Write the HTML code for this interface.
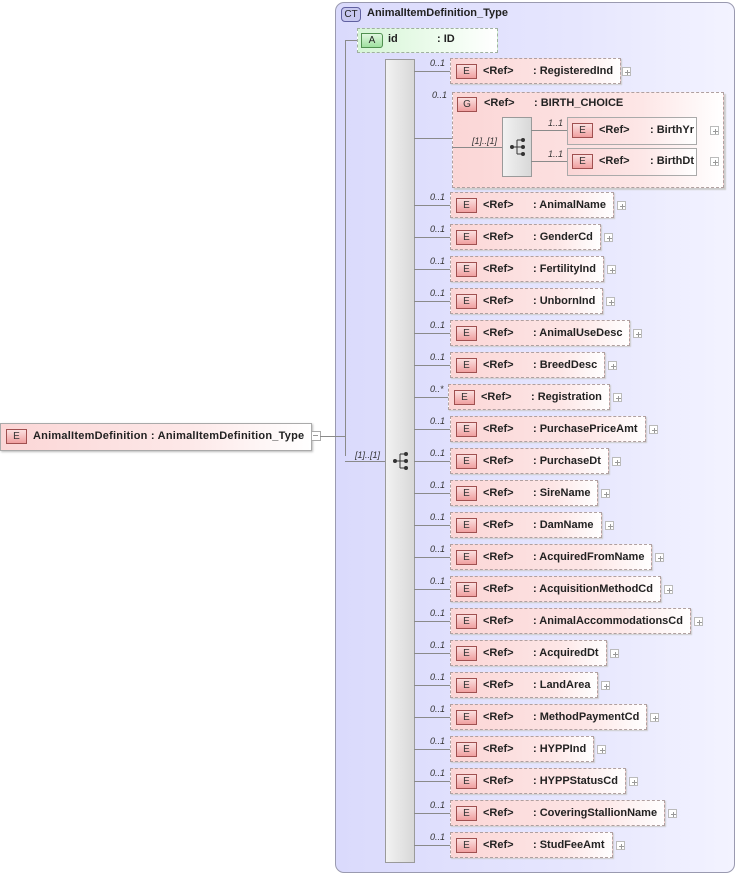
<!DOCTYPE html>
<html><head><meta charset="utf-8"><style>
body{margin:0;width:737px;height:875px;background:#fff;position:relative;font-family:"Liberation Sans",sans-serif;font-size:11px;font-weight:bold;color:#222;overflow:hidden}
.abs{position:absolute}
.ct{left:335px;top:2px;width:398px;height:869px;border:1px solid #9a9ab0;border-radius:9px;background:linear-gradient(90deg,#dadafc 0%,#e6e6fe 60%,#f3f3ff 100%)}
.hl{position:absolute;height:1px;background:#8a8a8a}
.vl{position:absolute;width:1px;background:#8a8a8a}
.bar{position:absolute;background:linear-gradient(90deg,#f2f2f2,#d8d8d8);border:1px solid #9a9a9a}
.r{position:absolute;left:414px;height:26px;width:320px}
.r .ln{position:absolute;left:0;top:13px;width:36px;height:1px;background:#8a8a8a}
.r i{position:absolute;left:16px;top:0;font-size:9px;font-weight:normal;color:#333}
.e{position:absolute;left:36px;top:0;height:24px;border:1px dashed #b0a0a0;background:linear-gradient(90deg,#fbd6d6,#fde6e6 70%,#fff);box-shadow:1px 1px 1px #ccc;white-space:nowrap;padding-right:7px}
.e b,.b{position:absolute;width:19px;height:13px;top:5px;left:5px;border:1px solid #a05050;background:linear-gradient(#fbe0e0,#f0a0a0);font-size:10px;font-weight:normal;text-align:center;line-height:13px;color:#333}
.e .ref{position:absolute;left:32px;top:6px}
.e .n{display:inline-block;padding-left:82px;line-height:13px;padding-top:6px}
.pw{position:absolute;top:9px;width:9px;height:9px}
.pw:before{content:"";position:absolute;left:2px;top:4px;width:5px;height:1px;background:#999}
.pw:after{content:"";position:absolute;left:4px;top:2px;width:1px;height:5px;background:#999}
.pw{border:1px solid #bbb;box-sizing:border-box;background:#fff}
.mult{position:absolute;font-size:9px;font-style:italic;font-weight:normal;color:#333}
</style></head><body>
<div class="abs ct"></div>
<div class="abs" style="left:341px;top:7px;width:18px;height:13px;border:1px solid #6060a0;border-radius:4px;background:#c8c8f0;font-size:10px;font-weight:normal;text-align:center;line-height:13px">CT</div>
<div class="abs" style="left:367px;top:7px">AnimalItemDefinition_Type</div>

<div class="abs" style="left:0;top:423px;width:310px;height:26px;border:1px solid #aaa;background:linear-gradient(90deg,#fbd6d6,#fde8e8 60%,#fff);box-shadow:1px 1px 2px #bbb"></div>
<div class="b" style="left:6px;top:429px">E</div>
<div class="abs" style="left:33px;top:430px;letter-spacing:0.23px">AnimalItemDefinition : AnimalItemDefinition_Type</div>
<div class="abs" style="left:311px;top:431px;width:8px;height:8px;border:1px solid #aaa;background:#fff"></div>
<div class="hl" style="left:313px;top:435px;width:5px;background:#999"></div>
<div class="hl" style="left:320px;top:436px;width:25px"></div>
<div class="vl" style="left:345px;top:40px;height:416px"></div>
<div class="hl" style="left:345px;top:40px;width:15px"></div>
<div class="hl" style="left:345px;top:461px;width:40px"></div>
<div class="mult" style="left:355px;top:450px">[1]..[1]</div>

<div class="abs" style="left:357px;top:28px;width:139px;height:23px;border:1px dashed #a0b0a0;background:linear-gradient(90deg,#d6f5d6,#eefcee 60%,#fff)"></div>
<div class="abs" style="left:361px;top:33px;width:20px;height:13px;border:1px solid #509050;border-radius:0 3px 3px 0;background:linear-gradient(#e0f8e0,#a0e0a0);font-size:10px;font-weight:normal;text-align:center;line-height:13px">A</div>
<div class="abs" style="left:388px;top:33px">id</div>
<div class="abs" style="left:437px;top:33px">: ID</div>

<div class="bar" style="left:385px;top:59px;width:28px;height:802px"></div>
<svg class="abs" style="left:392px;top:451px" width="18" height="20"><circle cx="3" cy="10" r="2" fill="#333"/><path d="M3 10H8M8 3V17M8 3H13M8 10H13M8 17H13" stroke="#333" fill="none"/><circle cx="14" cy="3" r="2" fill="#333"/><circle cx="14" cy="10" r="2" fill="#333"/><circle cx="14" cy="17" r="2" fill="#333"/></svg>

<div class="r" style="top:58px"><div class="ln"></div><i>0..1</i><div class="e"><b>E</b><span class="ref">&lt;Ref&gt;</span><span class="n">: RegisteredInd</span></div></div>
<div class="pw" style="left:622px;top:67px"></div>

<div class="hl" style="left:414px;top:138px;width:38px"></div>
<div class="mult" style="left:432px;top:90px">0..1</div>
<div class="abs" style="left:452px;top:92px;width:270px;height:94px;border:1px dashed #b0a0a0;background:linear-gradient(90deg,#fbd6d6,#fde6e6 70%,#fff);box-shadow:2px 2px 1px #ccc"></div>
<div class="b" style="left:457px;top:97px;width:18px">G</div>
<div class="abs" style="left:484px;top:97px">&lt;Ref&gt;</div>
<div class="abs" style="left:534px;top:97px">: BIRTH_CHOICE</div>
<div class="hl" style="left:452px;top:147px;width:50px"></div>
<div class="mult" style="left:472px;top:136px">[1]..[1]</div>
<div class="bar" style="left:502px;top:117px;width:28px;height:58px"></div>
<svg class="abs" style="left:509px;top:137px" width="18" height="20"><circle cx="3" cy="10" r="2" fill="#333"/><path d="M3 10H8M8 3V17M8 3H13M8 10H13M8 17H13" stroke="#333" fill="none"/><circle cx="14" cy="3" r="2" fill="#333"/><circle cx="14" cy="10" r="2" fill="#333"/><circle cx="14" cy="17" r="2" fill="#333"/></svg>
<div class="hl" style="left:531px;top:130px;width:36px"></div>
<div class="hl" style="left:531px;top:161px;width:36px"></div>
<div class="mult" style="left:548px;top:118px">1..1</div>
<div class="mult" style="left:548px;top:149px">1..1</div>
<div class="abs" style="left:567px;top:117px;width:128px;height:26px;border:1px solid #aaa;background:linear-gradient(90deg,#fbd6d6,#fde8e8 60%,#fff)"></div>
<div class="b" style="left:572px;top:123px">E</div>
<div class="abs" style="left:599px;top:124px">&lt;Ref&gt;</div>
<div class="abs" style="left:650px;top:124px">: BirthYr</div>
<div class="pw" style="left:710px;top:126px"></div>
<div class="abs" style="left:567px;top:148px;width:128px;height:26px;border:1px solid #aaa;background:linear-gradient(90deg,#fbd6d6,#fde8e8 60%,#fff)"></div>
<div class="b" style="left:572px;top:154px">E</div>
<div class="abs" style="left:599px;top:155px">&lt;Ref&gt;</div>
<div class="abs" style="left:650px;top:155px">: BirthDt</div>
<div class="pw" style="left:710px;top:157px"></div>

<div class="r" style="top:192px"><div class="ln"></div><i>0..1</i><div class="e"><b>E</b><span class="ref">&lt;Ref&gt;</span><span class="n">: AnimalName</span><span class="pw" style="position:absolute;right:-13px;top:8px"></span></div></div>
<div class="r" style="top:224px"><div class="ln"></div><i>0..1</i><div class="e"><b>E</b><span class="ref">&lt;Ref&gt;</span><span class="n">: GenderCd</span><span class="pw" style="position:absolute;right:-13px;top:8px"></span></div></div>
<div class="r" style="top:256px"><div class="ln"></div><i>0..1</i><div class="e"><b>E</b><span class="ref">&lt;Ref&gt;</span><span class="n">: FertilityInd</span><span class="pw" style="position:absolute;right:-13px;top:8px"></span></div></div>
<div class="r" style="top:288px"><div class="ln"></div><i>0..1</i><div class="e"><b>E</b><span class="ref">&lt;Ref&gt;</span><span class="n">: UnbornInd</span><span class="pw" style="position:absolute;right:-13px;top:8px"></span></div></div>
<div class="r" style="top:320px"><div class="ln"></div><i>0..1</i><div class="e"><b>E</b><span class="ref">&lt;Ref&gt;</span><span class="n">: AnimalUseDesc</span><span class="pw" style="position:absolute;right:-13px;top:8px"></span></div></div>
<div class="r" style="top:352px"><div class="ln"></div><i>0..1</i><div class="e"><b>E</b><span class="ref">&lt;Ref&gt;</span><span class="n">: BreedDesc</span><span class="pw" style="position:absolute;right:-13px;top:8px"></span></div></div>
<div class="r" style="top:384px"><div class="ln" style="width:34px"></div><i>0..*</i><div class="e" style="left:34px"><b>E</b><span class="ref">&lt;Ref&gt;</span><span class="n">: Registration</span><span class="pw" style="position:absolute;right:-13px;top:8px"></span></div></div>
<div class="r" style="top:416px"><div class="ln"></div><i>0..1</i><div class="e"><b>E</b><span class="ref">&lt;Ref&gt;</span><span class="n">: PurchasePriceAmt</span><span class="pw" style="position:absolute;right:-13px;top:8px"></span></div></div>
<div class="r" style="top:448px"><div class="ln"></div><i>0..1</i><div class="e"><b>E</b><span class="ref">&lt;Ref&gt;</span><span class="n">: PurchaseDt</span><span class="pw" style="position:absolute;right:-13px;top:8px"></span></div></div>
<div class="r" style="top:480px"><div class="ln"></div><i>0..1</i><div class="e"><b>E</b><span class="ref">&lt;Ref&gt;</span><span class="n">: SireName</span><span class="pw" style="position:absolute;right:-13px;top:8px"></span></div></div>
<div class="r" style="top:512px"><div class="ln"></div><i>0..1</i><div class="e"><b>E</b><span class="ref">&lt;Ref&gt;</span><span class="n">: DamName</span><span class="pw" style="position:absolute;right:-13px;top:8px"></span></div></div>
<div class="r" style="top:544px"><div class="ln"></div><i>0..1</i><div class="e"><b>E</b><span class="ref">&lt;Ref&gt;</span><span class="n">: AcquiredFromName</span><span class="pw" style="position:absolute;right:-13px;top:8px"></span></div></div>
<div class="r" style="top:576px"><div class="ln"></div><i>0..1</i><div class="e"><b>E</b><span class="ref">&lt;Ref&gt;</span><span class="n">: AcquisitionMethodCd</span><span class="pw" style="position:absolute;right:-13px;top:8px"></span></div></div>
<div class="r" style="top:608px"><div class="ln"></div><i>0..1</i><div class="e"><b>E</b><span class="ref">&lt;Ref&gt;</span><span class="n">: AnimalAccommodationsCd</span><span class="pw" style="position:absolute;right:-13px;top:8px"></span></div></div>
<div class="r" style="top:640px"><div class="ln"></div><i>0..1</i><div class="e"><b>E</b><span class="ref">&lt;Ref&gt;</span><span class="n">: AcquiredDt</span><span class="pw" style="position:absolute;right:-13px;top:8px"></span></div></div>
<div class="r" style="top:672px"><div class="ln"></div><i>0..1</i><div class="e"><b>E</b><span class="ref">&lt;Ref&gt;</span><span class="n">: LandArea</span><span class="pw" style="position:absolute;right:-13px;top:8px"></span></div></div>
<div class="r" style="top:704px"><div class="ln"></div><i>0..1</i><div class="e"><b>E</b><span class="ref">&lt;Ref&gt;</span><span class="n">: MethodPaymentCd</span><span class="pw" style="position:absolute;right:-13px;top:8px"></span></div></div>
<div class="r" style="top:736px"><div class="ln"></div><i>0..1</i><div class="e"><b>E</b><span class="ref">&lt;Ref&gt;</span><span class="n">: HYPPInd</span><span class="pw" style="position:absolute;right:-13px;top:8px"></span></div></div>
<div class="r" style="top:768px"><div class="ln"></div><i>0..1</i><div class="e"><b>E</b><span class="ref">&lt;Ref&gt;</span><span class="n">: HYPPStatusCd</span><span class="pw" style="position:absolute;right:-13px;top:8px"></span></div></div>
<div class="r" style="top:800px"><div class="ln"></div><i>0..1</i><div class="e"><b>E</b><span class="ref">&lt;Ref&gt;</span><span class="n">: CoveringStallionName</span><span class="pw" style="position:absolute;right:-13px;top:8px"></span></div></div>
<div class="r" style="top:832px"><div class="ln"></div><i>0..1</i><div class="e"><b>E</b><span class="ref">&lt;Ref&gt;</span><span class="n">: StudFeeAmt</span><span class="pw" style="position:absolute;right:-13px;top:8px"></span></div></div>
</body></html>
